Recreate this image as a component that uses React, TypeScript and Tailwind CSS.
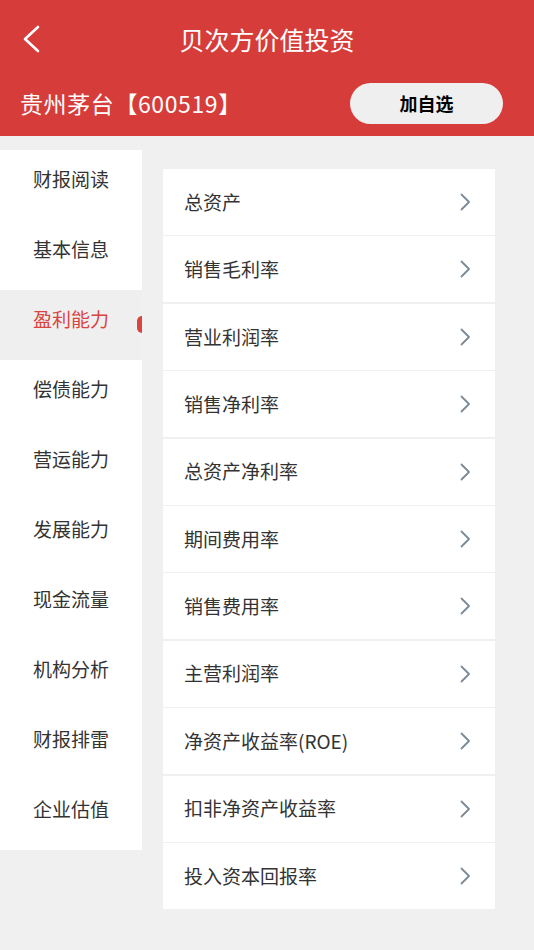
import React from "react";

const side = ["财报阅读", "基本信息", "盈利能力", "偿债能力", "营运能力", "发展能力", "现金流量", "机构分析", "财报排雷", "企业估值"];
const items = ["总资产", "销售毛利率", "营业利润率", "销售净利率", "总资产净利率", "期间费用率", "销售费用率", "主营利润率", "净资产收益率(ROE)", "扣非净资产收益率", "投入资本回报率"];

export default function App() {
  return (
    <div className="w-[534px] h-[950px] bg-[#f0f0f0] overflow-hidden" style={{ fontFamily: '"Noto Sans CJK SC", "Noto Sans", sans-serif' }}>
      <div className="bg-[#d63d3a] h-[136px] text-white">
        <div className="relative h-[78px] flex items-center justify-center">
          <svg className="absolute left-[22px] top-[25px]" width="20" height="28" viewBox="0 0 20 28" fill="none">
            <path d="M16 2 L3 14 L16 26" stroke="white" strokeWidth="2.6" strokeLinecap="round" strokeLinejoin="round" />
          </svg>
          <span className="text-[25px] leading-none">贝次方价值投资</span>
        </div>
        <div className="h-[50px] flex items-center justify-between pl-[20px] pr-[31px]">
          <span className="text-[23px] leading-none tracking-[0.6px]">贵州茅台【600519】</span>
          <button className="w-[153px] h-[41px] rounded-full bg-[#efefef] text-black font-bold text-[18px] flex items-center justify-center">加自选</button>
        </div>
      </div>
      <div className="flex items-start pt-[14px]">
        <div className="w-[142px] bg-white flex flex-col">
          {side.map((s, i) => (
            <div key={s} className={`relative h-[70px] flex items-center pl-[33px] text-[19px] ${i === 2 ? "bg-[#efefef] text-[#d8443f]" : "text-[#333]"}`}>
              <span className="leading-none mt-[-14px]">{s}</span>
              {i === 2 && <div className="absolute right-0 top-[26px] w-[5px] h-[17px] rounded-l-full bg-[#d8443f]" />}
            </div>
          ))}
        </div>
        <div className="ml-[21px] mt-[19px] w-[332px] flex flex-col gap-[1.4px]">
          {items.map((s) => (
            <div key={s} className="h-[66px] bg-white flex items-center justify-between pl-[21px] pr-[24px]">
              <span className="text-[19px] text-[#333]">{s}</span>
              <svg width="11" height="18" viewBox="0 0 11 18" fill="none">
                <path d="M1.5 1.5 L9 9 L1.5 16.5" stroke="#7b8a96" strokeWidth="1.8" strokeLinecap="round" strokeLinejoin="round" />
              </svg>
            </div>
          ))}
        </div>
      </div>
    </div>
  );
}
